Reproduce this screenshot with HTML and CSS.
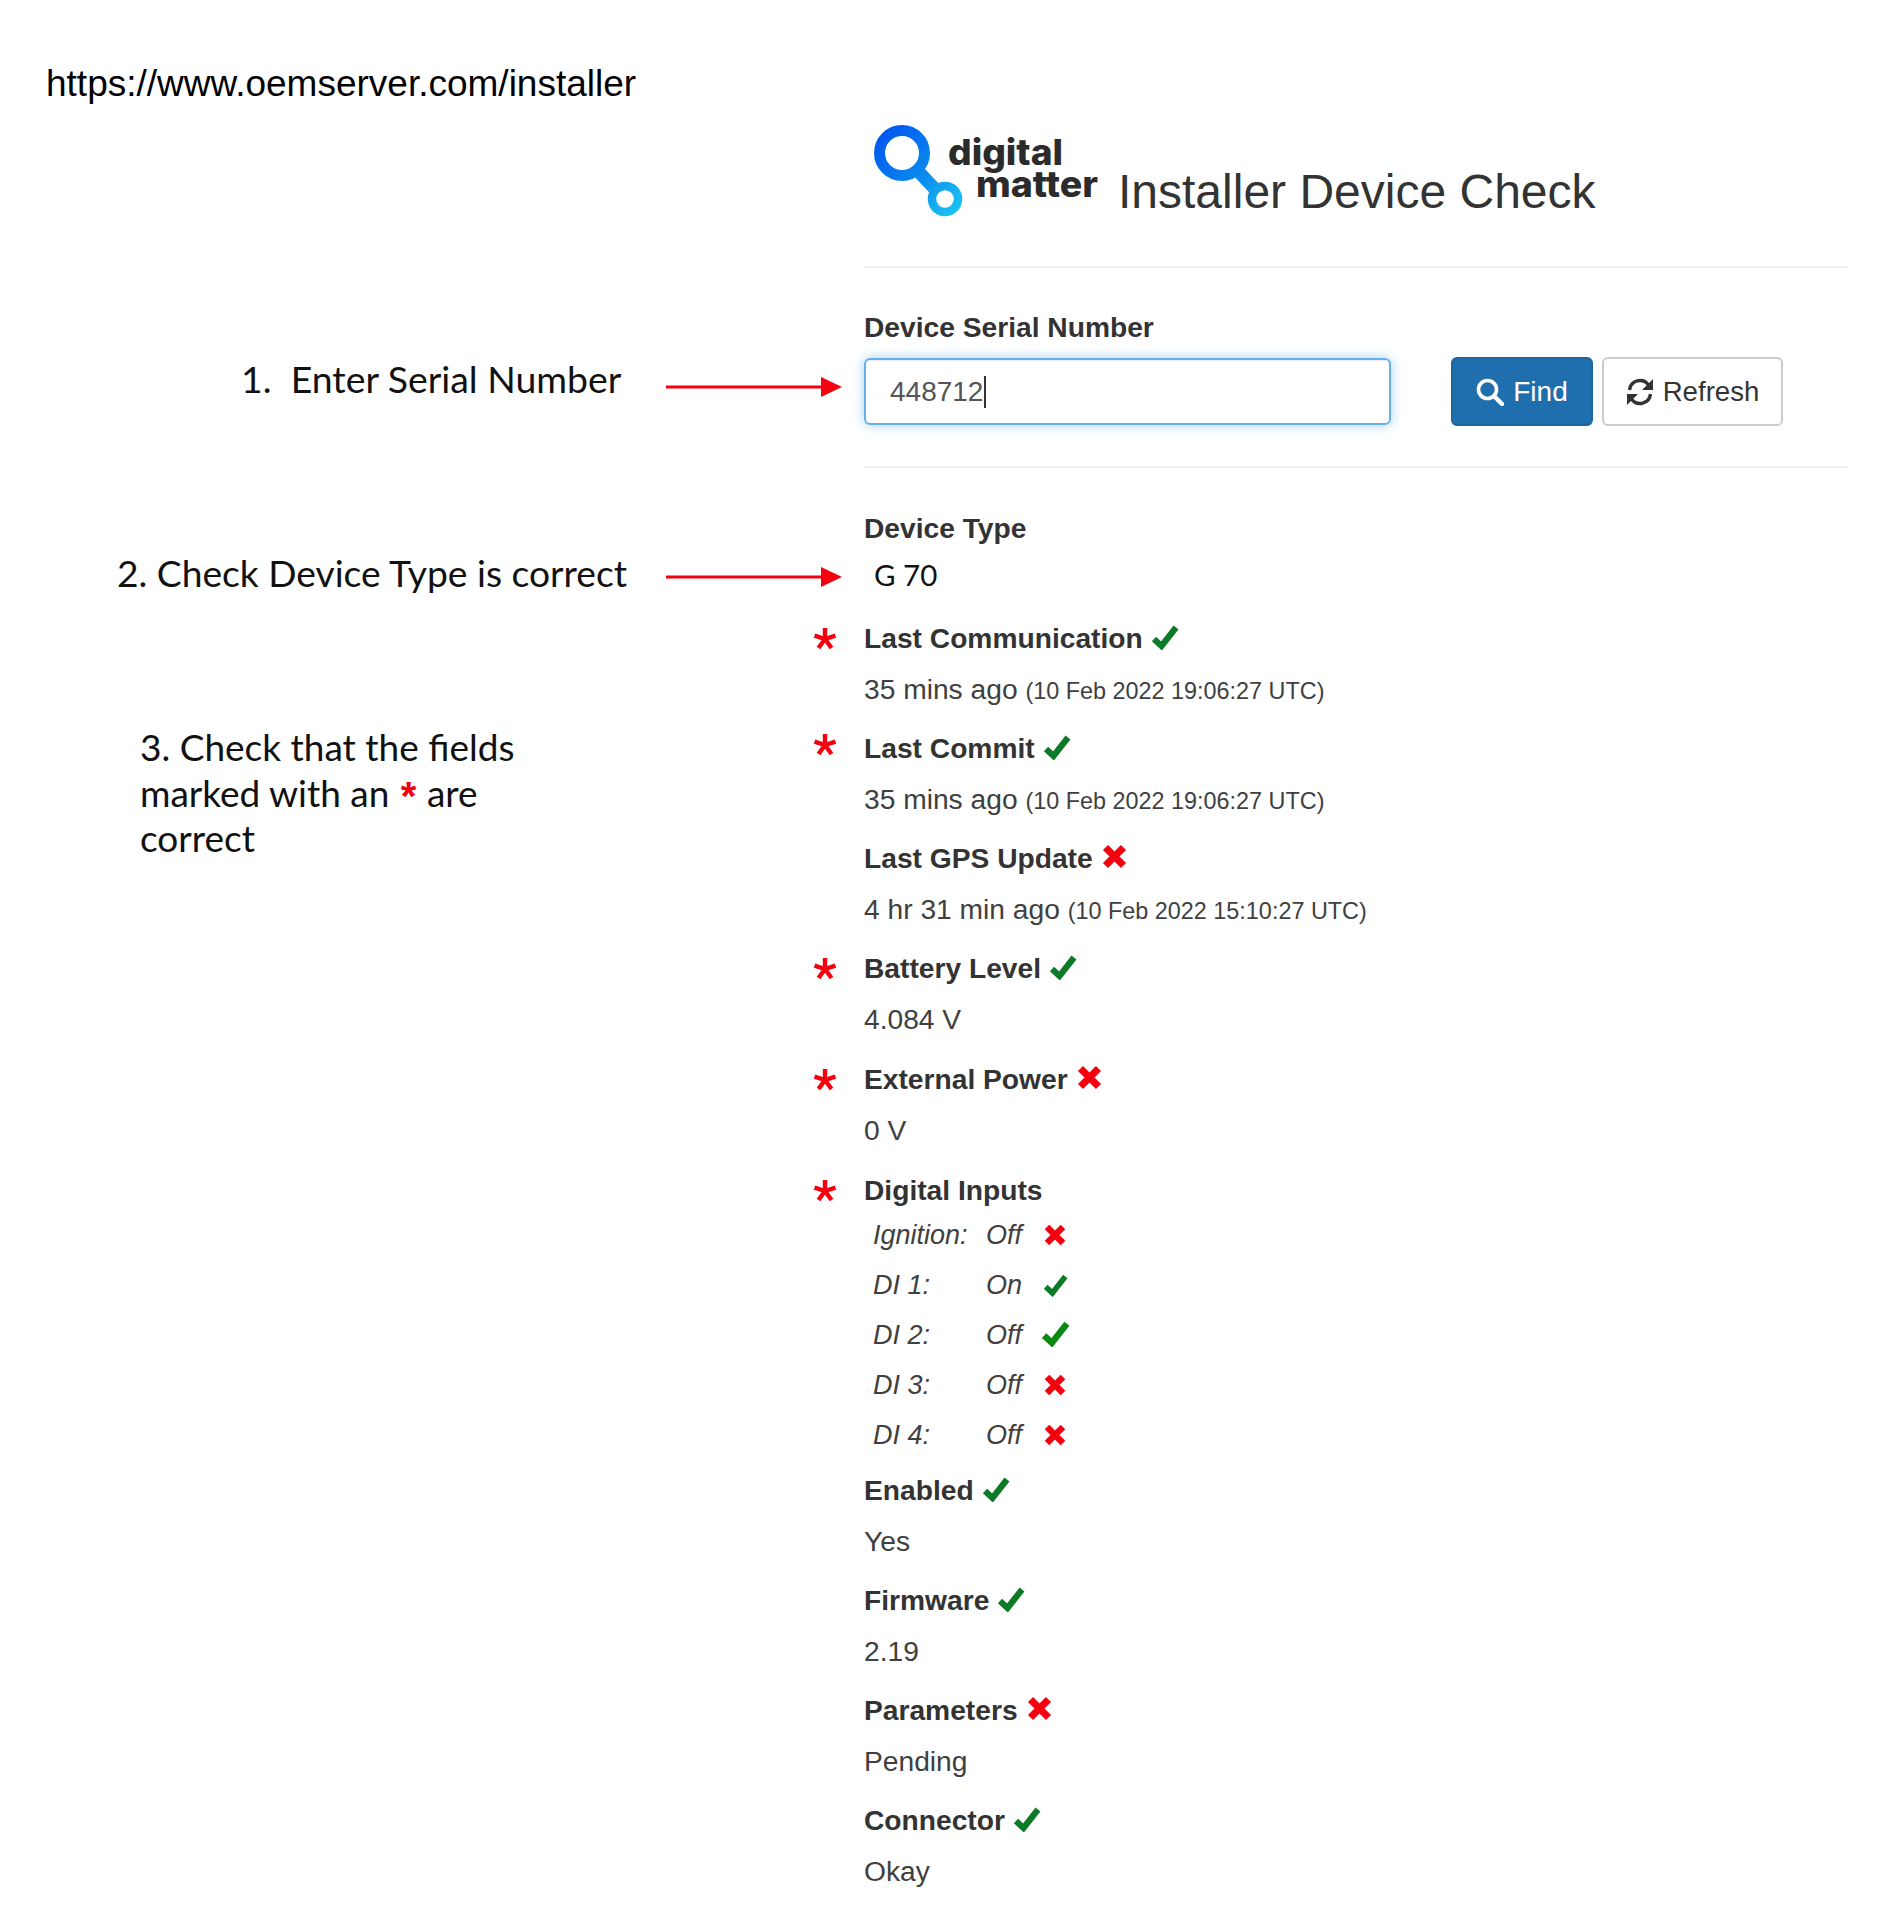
FILE: index.html
```html
<!DOCTYPE html>
<html lang="en">
<head>
<meta charset="utf-8">
<title>Installer Device Check</title>
<link rel="stylesheet" href="styles.css">
</head>
<body>
<svg class="defs" width="0" height="0" aria-hidden="true">
  <defs>
    <symbol id="check" viewBox="0 0 28 26"><path d="M3 15 L10.5 22 L25 3.5" fill="none" stroke="currentColor" stroke-width="6.2"/></symbol>
    <symbol id="cross" viewBox="0 0 24 24"><path d="M4 4 L20 20 M20 4 L4 20" fill="none" stroke="currentColor" stroke-width="6.4"/></symbol>
    <symbol id="star" viewBox="0 0 24 24"><path d="M12 12 V1 M12 12 L22.5 8.6 M12 12 L18.5 21 M12 12 L5.5 21 M12 12 L1.5 8.6" fill="none" stroke="currentColor" stroke-width="4.4"/></symbol>
    <linearGradient id="logoGrad" gradientUnits="userSpaceOnUse" x1="14" y1="14" x2="96" y2="98">
      <stop offset="0" stop-color="#0054f0"/>
      <stop offset="0.55" stop-color="#0a8cee"/>
      <stop offset="1" stop-color="#1cc8f4"/>
    </linearGradient>
  </defs>
</svg>
<div class="page">
  <aside class="notes">
    <p class="url">https://www.oemserver.com/installer</p>
    <div class="note note-one">
      <p class="note-text note-text-one">1.&nbsp; Enter Serial Number</p>
      <svg class="arrow arrow-one" viewBox="0 0 176 24"><path d="M0 12 H156" stroke="#f5000f" stroke-width="3"/><path d="M155 2 L176 12 L155 22 Z" fill="#f5000f"/></svg>
    </div>
    <div class="note note-two">
      <p class="note-text note-text-two">2. Check Device Type is correct</p>
      <svg class="arrow arrow-two" viewBox="0 0 176 24"><path d="M0 12 H156" stroke="#f5000f" stroke-width="3"/><path d="M155 2 L176 12 L155 22 Z" fill="#f5000f"/></svg>
    </div>
    <p class="note-text note-text-three">3. Check that the fields<br>marked with an <span class="red">*</span> are<br>correct</p>
  </aside>
  <main class="main">
    <header class="head">
      <svg class="logo" viewBox="0 0 240 110">
        <g fill="none" stroke="url(#logoGrad)">
          <circle cx="38" cy="36" r="22.5" stroke-width="11"/>
          <circle cx="81" cy="82" r="13" stroke-width="8.5"/>
          <path d="M53 53 L70 71" stroke-width="13"/>
        </g>
        <text class="logo-text" x="84" y="48" textLength="115" lengthAdjust="spacingAndGlyphs">digital</text>
        <text class="logo-text" x="112" y="80" textLength="122" lengthAdjust="spacingAndGlyphs">matter</text>
      </svg>
      <h1 class="title">Installer Device Check</h1>
    </header>
    <section class="search">
      <label class="label">Device Serial Number</label>
      <div class="controls">
        <div class="input">448712<span class="caret"></span></div>
        <button class="btn btn-primary" type="button">
          <svg class="btn-icon" viewBox="0 0 28 28"><circle cx="11.5" cy="11.5" r="9" fill="none" stroke="currentColor" stroke-width="3.6"/><path d="M18 18 L26 26" stroke="currentColor" stroke-width="4.4" stroke-linecap="round"/></svg>
          Find
        </button>
        <button class="btn btn-default" type="button">
          <svg class="btn-icon" viewBox="0 0 28 28"><path d="M3.5 12 A10.5 10.5 0 0 1 22.5 7" fill="none" stroke="currentColor" stroke-width="3.4"/><path d="M27 1 V12 H16 Z" fill="currentColor"/><path d="M24.5 16 A10.5 10.5 0 0 1 5.5 21" fill="none" stroke="currentColor" stroke-width="3.4"/><path d="M1 27 V16 H12 Z" fill="currentColor"/></svg>
          Refresh
        </button>
      </div>
    </section>
    <section class="fields">
      <div class="field field-type">
        <div class="label label-type">Device Type</div>
        <div class="type-value">G 70</div>
      </div>
      <div class="field">
        <svg class="star"><use href="#star"/></svg>
        <div class="label">Last Communication <svg class="ico-check"><use href="#check"/></svg></div>
        <div class="value">35 mins ago <small class="small">(10 Feb 2022 19:06:27 UTC)</small></div>
      </div>
      <div class="field">
        <svg class="star star-high"><use href="#star"/></svg>
        <div class="label">Last Commit <svg class="ico-check"><use href="#check"/></svg></div>
        <div class="value">35 mins ago <small class="small">(10 Feb 2022 19:06:27 UTC)</small></div>
      </div>
      <div class="field">
        <div class="label">Last GPS Update <svg class="ico-cross"><use href="#cross"/></svg></div>
        <div class="value">4 hr 31 min ago <small class="small">(10 Feb 2022 15:10:27 UTC)</small></div>
      </div>
      <div class="field field-wide">
        <svg class="star"><use href="#star"/></svg>
        <div class="label">Battery Level <svg class="ico-check"><use href="#check"/></svg></div>
        <div class="value">4.084 V</div>
      </div>
      <div class="field field-wide">
        <svg class="star"><use href="#star"/></svg>
        <div class="label">External Power <svg class="ico-cross"><use href="#cross"/></svg></div>
        <div class="value">0 V</div>
      </div>
      <div class="field field-inputs">
        <svg class="star"><use href="#star"/></svg>
        <div class="label label-inputs">Digital Inputs</div>
        <div class="di-row"><span>Ignition:</span><span>Off</span><svg class="di-cross"><use href="#cross"/></svg></div>
        <div class="di-row"><span>DI 1:</span><span>On</span><svg class="di-check"><use href="#check"/></svg></div>
        <div class="di-row"><span>DI 2:</span><span>Off</span><svg class="di-check di-check-big"><use href="#check"/></svg></div>
        <div class="di-row"><span>DI 3:</span><span>Off</span><svg class="di-cross"><use href="#cross"/></svg></div>
        <div class="di-row"><span>DI 4:</span><span>Off</span><svg class="di-cross"><use href="#cross"/></svg></div>
      </div>
      <div class="field">
        <div class="label">Enabled <svg class="ico-check"><use href="#check"/></svg></div>
        <div class="value">Yes</div>
      </div>
      <div class="field">
        <div class="label">Firmware <svg class="ico-check"><use href="#check"/></svg></div>
        <div class="value">2.19</div>
      </div>
      <div class="field">
        <div class="label">Parameters <svg class="ico-cross"><use href="#cross"/></svg></div>
        <div class="value">Pending</div>
      </div>
      <div class="field">
        <div class="label">Connector <svg class="ico-check"><use href="#check"/></svg></div>
        <div class="value">Okay</div>
      </div>
    </section>
  </main>
</div>
</body>
</html>
```
FILE: styles.css
```css
* { box-sizing: border-box; }
html, body { margin: 0; padding: 0; background: #fff; }
body { font-family: "Liberation Sans", Arial, sans-serif; color: #333; font-size: 28.2px; }
p, h1 { margin: 0; }
.defs { position: absolute; }
.page { display: grid; grid-template-columns: 864px 984px; width: 1882px; min-height: 1930px; }

.notes { padding: 64px 22px 0 0; }
.url { padding-left: 46px; font-size: 37px; line-height: 40px; color: #000; }
.note { display: flex; justify-content: space-between; align-items: flex-start; }
.note-one { margin-top: 252px; }
.note-two { margin-top: 148px; }
.note-text { font-family: Lato, "Open Sans", sans-serif; font-size: 37.4px; line-height: 46px; color: #111; }
.note-text-one { margin-left: 241px; }
.note-text-two { margin-left: 117px; font-size: 37.2px; }
.note-text-three { margin: 128px 0 0 140px; font-size: 37px; line-height: 45.5px; }
.red { color: #f5000f; font-family: "Liberation Sans", sans-serif; font-weight: 700; font-size: 40px; line-height: 0; padding: 0 1px 0 2px; position: relative; top: 3px; }
.arrow { width: 176px; height: 24px; flex: none; }
.arrow-one { margin-top: 19px; }
.arrow-two { margin-top: 15px; }

.head { display: flex; align-items: flex-start; height: 268px; padding-top: 117px; border-bottom: 2px solid #eee; }
.logo { width: 240px; height: 110px; flex: none; }
.logo-text { font-family: Inter, "Liberation Sans", sans-serif; font-weight: 800; font-size: 36px; fill: #2b2b2b; }
.title { margin: 47px 0 0 14px; font-size: 48px; font-weight: 400; line-height: 56px; color: #333; white-space: nowrap; }

.search { padding-top: 39px; padding-bottom: 40px; border-bottom: 2px solid #eee; }
.label { display: block; font-weight: 700; line-height: 40px; white-space: nowrap; }
.controls { display: flex; align-items: center; margin-top: 10px; height: 69px; }
.input { width: 527px; height: 67px; padding-left: 24px; border: 2px solid #66afe9; border-radius: 6px; box-shadow: 0 0 12px rgba(102, 175, 233, .6), inset 0 1px 1px rgba(0, 0, 0, .08); color: #555; line-height: 63px; font-size: 28px; display: flex; align-items: center; }
.caret { display: inline-block; width: 2px; height: 32px; background: #333; margin-left: 1px; }
.btn { display: flex; align-items: center; justify-content: center; gap: 9px; height: 69px; font-family: inherit; font-size: 28px; border-radius: 6px; padding: 0; }
.btn-icon { width: 28px; height: 28px; flex: none; }
.btn-primary { width: 142px; margin-left: 60px; background: #1f6fae; border: 2px solid #1c67a2; color: #fff; }
.btn-default { width: 181px; margin-left: 9px; background: #fff; border: 2px solid #ccc; color: #333; font-size: 27.6px; }

.fields { padding-top: 40px; }
.field { position: relative; margin-bottom: 19px; }
.field .label { margin-bottom: 11px; display: flex; align-items: center; gap: 8px; }
.field-type { margin-bottom: 23px; }
.field-wide { margin-bottom: 20px; }
.field .label-type { margin-bottom: 7px; }
.field .label-inputs { margin-bottom: 0; }
.field-inputs { margin-bottom: 10px; }
.type-value { padding-left: 10px; font-family: Lato, "Open Sans", sans-serif; font-size: 29.5px; line-height: 40px; color: #111; }
.value { line-height: 40px; color: #404040; white-space: nowrap; }
.small { font-size: 23.4px; line-height: 1; }
.star { position: absolute; left: -51px; top: 9px; width: 24px; height: 24px; color: #f5000f; }
.star-high { top: 5px; }
.ico-check { width: 28px; height: 26px; color: #0d7a28; flex: none; margin-top: -2px; }
.ico-cross { width: 27px; height: 27px; color: #f5000f; flex: none; margin-top: -3px; }
.di-row { display: grid; grid-template-columns: 113px 46px 26px; align-items: center; padding-left: 9px; height: 50px; font-size: 27px; font-style: italic; color: #404040; }
.di-cross { width: 24px; height: 24px; margin-left: 11px; color: #f5000f; }
.di-check { width: 25px; height: 24px; margin-left: 11px; color: #0d7a28; }
.di-check-big { width: 29px; height: 27px; margin-left: 9px; margin-top: -3px; color: #0a8a12; }
```
